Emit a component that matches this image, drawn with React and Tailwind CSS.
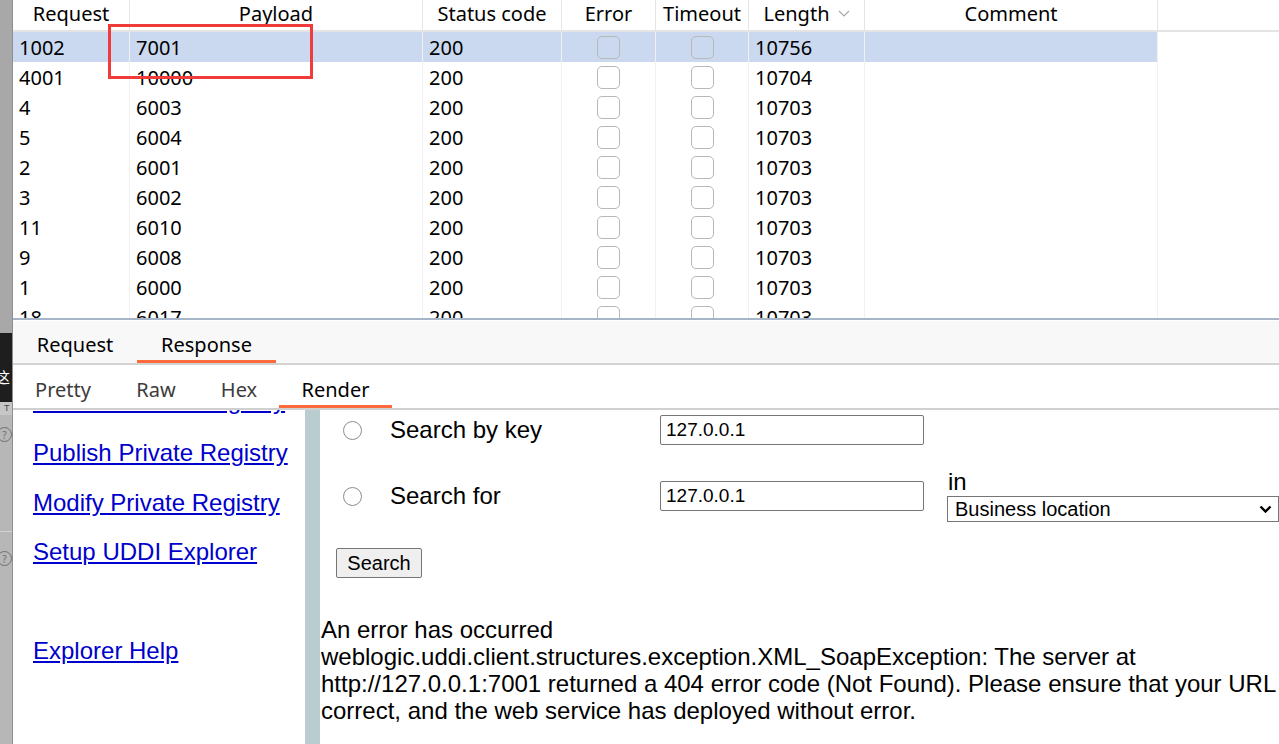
import React from 'react'

const COLS = [
  { key: 'req',     label: 'Request',     w: 'w-[117px]' },
  { key: 'payload', label: 'Payload',     w: 'w-[293px]' },
  { key: 'status',  label: 'Status code', w: 'w-[139px]' },
  { key: 'error',   label: 'Error',       w: 'w-[94px]',  check: true },
  { key: 'timeout', label: 'Timeout',     w: 'w-[93px]',  check: true },
  { key: 'length',  label: 'Length',      w: 'w-[116px]', sort: true },
  { key: 'comment', label: 'Comment',     w: 'w-[293px]' },
]

const ROWS = [
  { req: '1002', payload: '7001',  status: '200', length: '10756', selected: true },
  { req: '4001', payload: '10000', status: '200', length: '10704' },
  { req: '4',    payload: '6003',  status: '200', length: '10703' },
  { req: '5',    payload: '6004',  status: '200', length: '10703' },
  { req: '2',    payload: '6001',  status: '200', length: '10703' },
  { req: '3',    payload: '6002',  status: '200', length: '10703' },
  { req: '11',   payload: '6010',  status: '200', length: '10703' },
  { req: '9',    payload: '6008',  status: '200', length: '10703' },
  { req: '1',    payload: '6000',  status: '200', length: '10703' },
  { req: '18',   payload: '6017',  status: '200', length: '10703' },
]

const TOP_TABS = [
  { label: 'Request',  w: 'w-[124px]' },
  { label: 'Response', w: 'w-[139px]', active: true },
]

const VIEW_TABS = [
  { label: 'Pretty', w: 'w-[100px]' },
  { label: 'Raw',    w: 'w-[86px]' },
  { label: 'Hex',    w: 'w-[80px]' },
  { label: 'Render', w: 'w-[113px]', active: true },
]

// first one is scrolled mostly out of view
const LINKS = [
  'Search Private Registry',
  'Publish Private Registry',
  'Modify Private Registry',
  'Setup UDDI Explorer',
  null,
  'Explorer Help',
]

const ERROR_LINES = [
  'An error has occurred',
  'weblogic.uddi.client.structures.exception.XML_SoapException: The server at',
  'http://127.0.0.1:7001 returned a 404 error code (Not Found). Please ensure that your URL is',
  'correct, and the web service has deployed without error.',
]

function Check() {
  return <div className="w-[23px] h-[23px] rounded-[5px] border border-[#b8b8b8]" />
}

function HelpDot() {
  return (
    <div className="w-[15px] h-[15px] -ml-[3px] rounded-full border border-[#6f6f6f] flex items-center justify-center text-[10px] leading-none text-[#6f6f6f]">?</div>
  )
}

function SideStrip() {
  return (
    <div className="w-[13px] h-full flex flex-col overflow-hidden border-r border-[#8f8f8f]">
      <div className="h-[333px] bg-[#a8a8a8]" />
      <div className="h-[69px] bg-[#1e1e1e] pt-[36px] overflow-hidden">
        <span className="block -ml-[5px] text-[15px] leading-[16px] text-white font-['Noto_Sans_CJK_SC',sans-serif]">这</span>
      </div>
      <div className="h-[13px] bg-[#c6c6c6] pl-[4px] text-[9px] leading-[13px] text-[#444] font-['Liberation_Sans',sans-serif]">T</div>
      <div className="flex-1 bg-[#b7b7b7] flex flex-col">
        <div className="h-[117px] pt-[12px] border-b border-[#d2d2d2]">
          <HelpDot />
        </div>
        <div className="pt-[19px]">
          <HelpDot />
        </div>
      </div>
    </div>
  )
}

function ResultsTable() {
  return (
    <div className="relative h-[320px] overflow-hidden border-b-2 border-[#a7b5c8] bg-white font-['Noto_Sans','Open_Sans',sans-serif] text-black">
      {/* Header */}
      <div className="flex h-[32px] border-b-2 border-[#e4e4e4]">
        {COLS.map(c => (
          <div key={c.key} className={`${c.w} flex justify-center items-start border-r border-[#e4e4e4] text-[20px] leading-[27px]`}>
            <span>{c.label}</span>
            {c.sort && (
              <svg className="ml-[8px] mt-[10px]" width="12" height="7" viewBox="0 0 12 7" fill="none">
                <path d="M1 1l5 5 5-5" stroke="#a9a9a9" strokeWidth="1.2" />
              </svg>
            )}
          </div>
        ))}
        <div className="flex-1" />
      </div>

      {/* Rows */}
      {ROWS.map((r, i) => (
        <div key={i} className="flex h-[30px]">
          <div className={`flex ${r.selected ? 'bg-[#cad9ef]' : ''}`}>
            {COLS.map(c => (
              <div key={c.key} className={`${c.w} h-full border-r border-[#f1f1f1] ${c.check ? 'flex items-center justify-center' : 'pl-[6px] text-[20px] leading-[31px]'}`}>
                {c.check ? <Check /> : r[c.key]}
              </div>
            ))}
          </div>
          <div className="flex-1" />
        </div>
      ))}

      {/* highlight box */}
      <div className="absolute left-[95px] top-[24px] w-[205px] h-[55px] border-[3px] border-[#f03b3b]" />
    </div>
  )
}

function TabBars() {
  return (
    <div className="font-['Noto_Sans','Open_Sans',sans-serif] text-[20px] leading-[26px]">
      <div className="flex h-[45px] bg-[#f8f8f8] border-t border-white border-b-2 border-b-[#d3d3d3]">
        {TOP_TABS.map(t => (
          <div key={t.label} className={`${t.w} h-full pt-[11px] text-center text-black ${t.active ? 'border-b-[3px] border-[#ff6a3d]' : ''}`}>
            {t.label}
          </div>
        ))}
      </div>
      <div className="flex h-[45px] bg-white border-b-2 border-[#d0d0d0]">
        {VIEW_TABS.map(t => (
          <div key={t.label} className={`${t.w} h-full pt-[12px] text-center ${t.active ? 'text-black border-b-[3px] border-[#ff6a3d]' : 'text-[#3c3c3c]'}`}>
            {t.label}
          </div>
        ))}
      </div>
    </div>
  )
}

function Radio() {
  return <div className="w-[19px] h-[19px] shrink-0 rounded-full border border-[#8d8d8d] bg-white" />
}

function TextBox({ value }) {
  return (
    <input
      readOnly
      value={value}
      className="w-[264px] h-[30px] shrink-0 border border-[#767676] rounded-[2px] pl-[5px] text-[19px] text-black outline-none"
    />
  )
}

function RenderPane() {
  return (
    <div className="flex flex-1 min-h-0 font-['Liberation_Sans',Arial,sans-serif] text-[24px]">
      {/* left frame */}
      <div className="w-[292px] h-full bg-white overflow-hidden">
        <div className="-mt-[34px] pl-[20px] leading-[49.4px]">
          {LINKS.map((l, i) => (
            <div key={i} className={`${i === 0 ? 'h-[52.4px]' : 'h-[49.4px]'} whitespace-nowrap`}>
              {l && <a className="text-[#0000cc] underline">{l}</a>}
            </div>
          ))}
        </div>
      </div>

      <div className="w-[15px] h-full bg-[#b9ccd0]" />

      {/* right frame */}
      <div className="flex-1 h-full bg-white overflow-hidden text-black">
        <div className="flex items-center h-[40px] pl-[23px]">
          <Radio />
          <div className="w-[270px] ml-[28px] shrink-0 whitespace-nowrap">Search by key</div>
          <TextBox value="127.0.0.1" />
        </div>

        <div className="flex items-center h-[60px] mt-[16px] pl-[23px]">
          <Radio />
          <div className="w-[270px] ml-[28px] shrink-0 whitespace-nowrap">Search for</div>
          <TextBox value="127.0.0.1" />
          <div className="ml-[23px] flex flex-col gap-[2px] shrink-0">
            <div className="leading-[24px] pl-[1px]">in</div>
            <div className="w-[332px] h-[26px] border border-[#767676] flex items-center pl-[7px] pr-[6px] text-[20px]">
              <span className="flex-1">Business location</span>
              <svg width="13" height="8" viewBox="0 0 13 8" fill="none">
                <path d="M1.5 1.5l5 5 5-5" stroke="#000" strokeWidth="2.4" />
              </svg>
            </div>
          </div>
        </div>

        <div className="flex mt-[22px] pl-[16px]">
          <button className="w-[86px] h-[30px] bg-[#efefef] border border-[#767676] rounded-[2px] text-[20px] leading-[26px] text-black">Search</button>
        </div>

        <div className="mt-[38px] pl-[1px] leading-[27px]">
          {ERROR_LINES.map((t, i) => (
            <div key={i} className="whitespace-nowrap">{t}</div>
          ))}
        </div>
      </div>
    </div>
  )
}

export default function App() {
  return (
    <div className="w-[1279px] h-[744px] flex overflow-hidden bg-white">
      <SideStrip />
      <div className="flex-1 min-w-0 h-full flex flex-col">
        <ResultsTable />
        <TabBars />
        <RenderPane />
      </div>
    </div>
  )
}
